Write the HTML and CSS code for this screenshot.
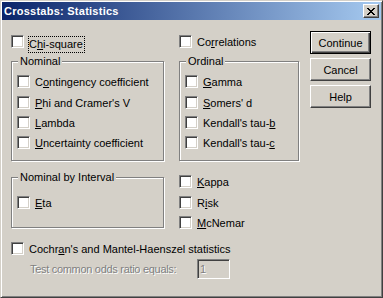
FILE: index.html
```html
<html>
	<head>
		<title>Crosstabs: Statistics</title>
		<link rel="stylesheet" href="styles.css">
	</head>
	<body>
		<div class="Window">
			<div class="TitleBar">
				<span class="TitleText">Crosstabs: Statistics</span>
				<span class="CloseButton">
					<svg width="8" height="7" viewBox="0 0 8 7" shape-rendering="crispEdges">
						<path d="M0 0h2v1h-2z M6 0h2v1h-2z M1 1h2v1h-2z M5 1h2v1h-2z M2 2h4v1h-4z M3 3h2v1h-2z M2 4h4v1h-4z M1 5h2v1h-2z M5 5h2v1h-2z M0 6h2v1h-2z M6 6h2v1h-2z" fill="#000"/>
					</svg>
				</span>
			</div>
			<div class="Content">
				<div class="MainArea">
					<label class="Check TopRow"><input type="checkbox"><span class="FocusText">C<u>h</u>i-square</span></label>
					<label class="Check TopRow"><input type="checkbox"><span>Co<u>r</u>relations</span></label>

					<div class="Group Tall">
						<div class="GroupTitle">Nominal</div>
						<label class="Check First"><input type="checkbox"><span>C<u>o</u>ntingency coefficient</span></label>
						<label class="Check Second"><input type="checkbox"><span><u>P</u>hi and Cramer's V</span></label>
						<label class="Check"><input type="checkbox"><span><u>L</u>ambda</span></label>
						<label class="Check"><input type="checkbox"><span><u>U</u>ncertainty coefficient</span></label>
					</div>
					<div class="Group Tall">
						<div class="GroupTitle">Ordinal</div>
						<label class="Check First"><input type="checkbox"><span><u>G</u>amma</span></label>
						<label class="Check Second"><input type="checkbox"><span><u>S</u>omers' d</span></label>
						<label class="Check"><input type="checkbox"><span>Kendall's tau-<u>b</u></span></label>
						<label class="Check"><input type="checkbox"><span>Kendall's tau-<u>c</u></span></label>
					</div>

					<div class="Group Short">
						<div class="GroupTitle">Nominal by Interval</div>
						<label class="Check EtaRow"><input type="checkbox"><span><u>E</u>ta</span></label>
					</div>
					<div class="CheckColumn">
						<label class="Check"><input type="checkbox"><span><u>K</u>appa</span></label>
						<label class="Check Second"><input type="checkbox"><span>R<u>i</u>sk</span></label>
						<label class="Check"><input type="checkbox"><span><u>M</u>cNemar</span></label>
					</div>

					<label class="Check Wide CochranRow"><input type="checkbox"><span>Cochr<u>a</u>n's and Mantel-Haenszel statistics</span></label>
					<div class="Wide OddsRow">
						<span class="DisabledText">Test common odds ratio equals:</span>
						<input class="OddsField" type="text" value="1" disabled>
					</div>
				</div>
				<div class="Buttons">
					<button class="DialogButton Default">Continue</button>
					<button class="DialogButton">Cancel</button>
					<button class="DialogButton">Help</button>
				</div>
			</div>
		</div>
	</body>
</html>
```

FILE: styles.css
```css
/**************************************************************************/
/*
/* Window frame
/*
/**************************************************************************/

body {
	margin: 0;
	background-color: #d4d0c8;
	font-family: "Liberation Sans", Arial, sans-serif;
	font-size: 11px;
	line-height: 13px;
	color: #000;
}

.Window {
	width: 383px;
	height: 298px;
	box-sizing: border-box;
	padding: 1px;
	background-color: #d4d0c8;
	border: 1px solid;
	border-color: #d4d0c8 #404040 #404040 #d4d0c8;
	box-shadow: inset 1px 1px 0 #fff, inset -1px -1px 0 #808080;
}

.TitleBar {
	height: 18px;
	display: flex;
	justify-content: space-between;
	background: linear-gradient(to right, #0a246a, #a6caf0);
}

.TitleText {
	padding-left: 2px;
	color: #fff;
	font-weight: bold;
	letter-spacing: 0.25px;
	line-height: 18px;
}

.CloseButton {
	width: 16px;
	height: 14px;
	box-sizing: border-box;
	margin: 2px 2px 0 0;
	padding: 3px 0 0 3px;
	background-color: #d4d0c8;
	border: 1px solid;
	border-color: #fff #404040 #404040 #fff;
	box-shadow: inset -1px -1px 0 #808080;
}

.CloseButton svg {
	display: block;
}

/**************************************************************************/
/*
/* Dialog body
/*
/**************************************************************************/

.Content {
	display: flex;
	padding: 11px 0 0 9px;
}

.MainArea {
	width: 288px;
	margin-top: 4px;
	display: grid;
	grid-template-columns: 153px 120px;
	column-gap: 15px;
	align-items: start;
}

.Wide {
	grid-column: 1 / 3;
}

.Check {
	display: flex;
	align-items: flex-start;
	height: 13px;
	white-space: nowrap;
}

.Check input {
	appearance: none;
	-webkit-appearance: none;
	width: 13px;
	height: 13px;
	margin: 0 5px 0 0;
	box-sizing: border-box;
	background-color: #fff;
	border: 1px solid;
	border-color: #808080 #fff #fff #808080;
	box-shadow: inset 1px 1px 0 #404040, inset -1px -1px 0 #d4d0c8;
	flex: none;
}

.Check span {
	margin-top: 1px;
}

.FocusText {
	margin: -1px 0 0 -1px;
	padding: 1px 1px 1px 0;
	border: 1px dotted #000;
}

/**************************************************************************/
/*
/* Group boxes
/*
/**************************************************************************/

.Group {
	box-sizing: border-box;
	padding: 0 0 0 5px;
	border: 1px solid #808080;
	box-shadow: inset 1px 1px 0 #fff, 1px 1px 0 #fff;
}

.Group.Tall {
	height: 100px;
	margin-top: 13px;
}

.Group.Short {
	height: 51px;
	margin-top: 16px;
}

.GroupTitle {
	width: fit-content;
	margin: -7px 0 0 1px;
	padding: 0 2px;
	background-color: #d4d0c8;
}

.Group .Check {
	margin-top: 7px;
}

.Group .Check.Second {
	margin-top: 8px;
}

.Group .Check.EtaRow {
	margin-top: 12px;
}

.CheckColumn {
	margin-top: 14px;
}

.CheckColumn .Check + .Check {
	margin-top: 7px;
}

.CheckColumn .Check.Second {
	margin-top: 8px;
}

.CochranRow {
	margin-top: 13px;
}

.OddsRow {
	display: flex;
	align-items: center;
	margin-top: 4px;
	padding-left: 19px;
}

.DisabledText {
	width: 167px;
	letter-spacing: -0.3px;
	color: #808080;
	text-shadow: 1px 1px 0 #fff;
}

.OddsField {
	width: 33px;
	height: 20px;
	box-sizing: border-box;
	margin: 0;
	padding: 0 0 0 2px;
	font-family: inherit;
	font-size: 11px;
	color: #808080;
	text-shadow: 1px 1px 0 #fff;
	background-color: #d4d0c8;
	border: 1px solid;
	border-color: #808080 #fff #fff #808080;
	box-shadow: inset 1px 1px 0 #404040, inset -1px -1px 0 #d4d0c8;
	outline: none;
}

/**************************************************************************/
/*
/* Buttons
/*
/**************************************************************************/

.Buttons {
	margin-left: 11px;
	display: flex;
	flex-direction: column;
	gap: 4px;
}

.DialogButton {
	width: 61px;
	height: 23px;
	box-sizing: border-box;
	padding: 0;
	font-family: inherit;
	font-size: 11px;
	color: #000;
	background-color: #d4d0c8;
	border: 1px solid;
	border-color: #fff #404040 #404040 #fff;
	box-shadow: inset -1px -1px 0 #808080;
}

.DialogButton.Default {
	border: 1px solid #000;
	box-shadow: inset 1px 1px 0 #fff, inset -1px -1px 0 #404040, inset -2px -2px 0 #808080;
}
```
